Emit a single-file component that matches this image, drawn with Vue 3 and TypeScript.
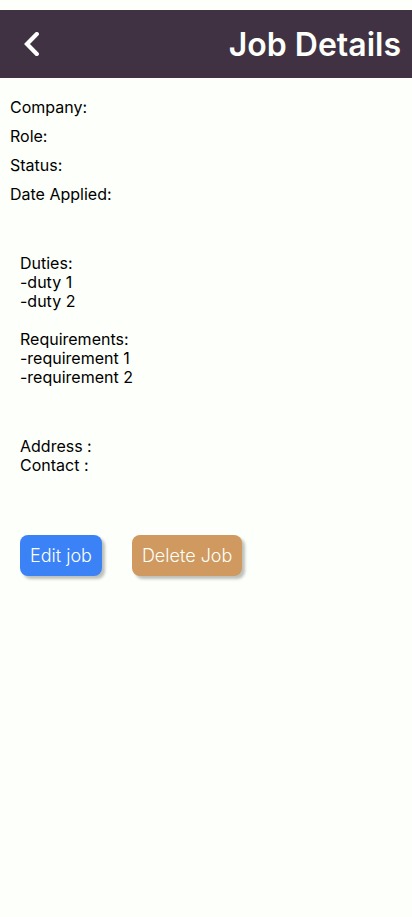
<script setup lang="ts">
interface Field {
  label: string
  value: string
}

const fields: Field[] = [
  { label: 'Company:', value: '' },
  { label: 'Role:', value: '' },
  { label: 'Status:', value: '' },
  { label: 'Date Applied:', value: '' },
]
const duties: string[] = ['duty 1', 'duty 2']
const requirements: string[] = ['requirement 1', 'requirement 2']
</script>

<template>
  <div class="page">
    <header class="bar">
      <button class="back" type="button" aria-label="Back">
        <svg viewBox="0 0 16 24" width="16" height="24" aria-hidden="true">
          <path
            d="M12.8 2.1 3 12 12.8 21.9"
            fill="none"
            stroke="currentColor"
            stroke-width="4.2"
            stroke-linecap="round"
          />
        </svg>
      </button>
      <h1>Job Details</h1>
    </header>
    <main>
      <section class="fields">
        <p v-for="f in fields" :key="f.label">{{ f.label }} {{ f.value }}</p>
      </section>
      <section class="block">
        <p>Duties:</p>
        <p v-for="d in duties" :key="d">-{{ d }}</p>
        <p class="next">Requirements:</p>
        <p v-for="r in requirements" :key="r">-{{ r }}</p>
      </section>
      <section class="block">
        <p>Address :</p>
        <p>Contact :</p>
      </section>
      <div class="actions">
        <button class="edit" type="button">Edit job</button>
        <button class="delete" type="button">Delete Job</button>
      </div>
    </main>
  </div>
</template>

<style>
body {
  background: #fdfffa;
}
</style>

<style scoped>
.page {
  min-height: 100vh;
  box-sizing: border-box;
  padding-top: 10px;
  background: #fdfffa;
  color: #000;
  font-family: Inter, sans-serif;
  font-size: 16px;
  line-height: 19px;
}
p,
h1 {
  margin: 0;
}
.bar {
  display: flex;
  align-items: center;
  justify-content: space-between;
  height: 68px;
  padding: 0 11px 0 24px;
  box-sizing: border-box;
  background: #403143;
  color: #fdfffa;
}
h1 {
  font-size: 32px;
  line-height: 40px;
  font-weight: 600;
  padding-top: 2px;
}
button {
  border: 0;
  font: inherit;
  cursor: pointer;
}
.back {
  display: flex;
  padding: 0;
  background: none;
  color: #fff;
}
.fields {
  display: grid;
  gap: 10px;
  padding: 20px 10px 0;
}
.block {
  padding: 50px 20px 0;
}
.next {
  margin-top: 19px;
}
.actions {
  display: flex;
  gap: 30px;
  padding: 60px 20px 20px;
}
.actions button {
  padding: 10px;
  border-radius: 8px;
  color: #fdfffa;
  font-size: 18px;
  font-weight: 300;
  line-height: 21px;
  box-shadow: 3px 3px 3px rgba(0, 0, 0, 0.25);
}
.actions .edit {
  background: #3b82f6;
}
.actions .delete {
  background: #cf995f;
}
</style>
